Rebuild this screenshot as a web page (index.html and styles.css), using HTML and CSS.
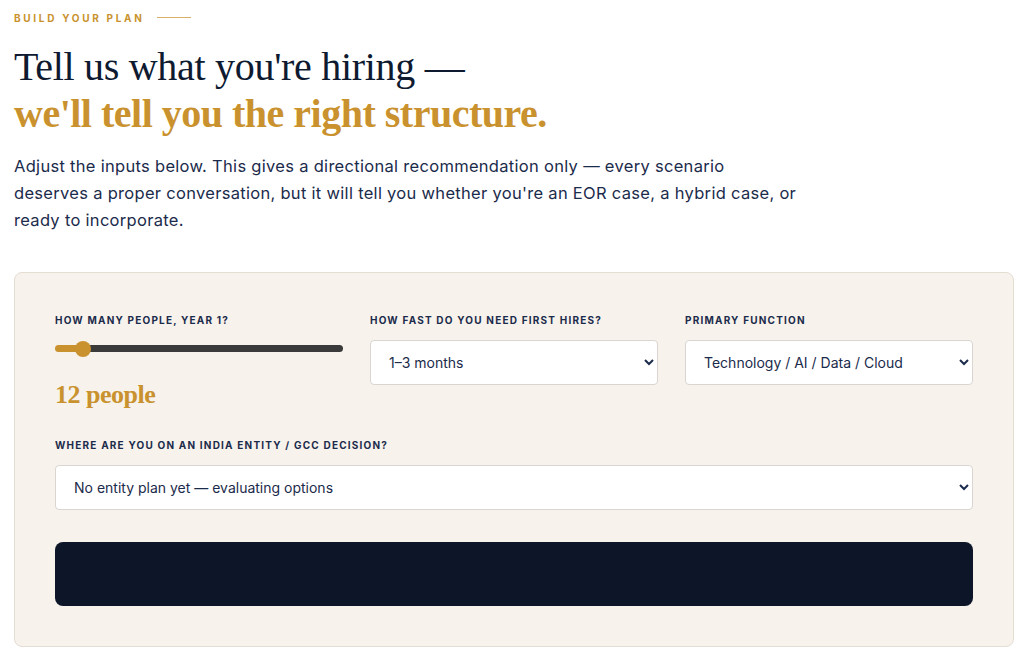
FILE: index.html
```html
<!DOCTYPE html>
<html lang="en">
  <head>
    <meta charset="UTF-8" />
    <meta name="viewport" content="width=device-width, initial-scale=1.0" />
    <title>Build your plan</title>
    <link rel="stylesheet" href="styles.css">
  </head>
  <body>
    <section class="plan">
      <div class="eyebrow">
        <span>Build your plan</span>
        <span class="eyebrow-line"></span>
      </div>

      <h1 class="title">
        Tell us what you're hiring —<br />
        <strong>we'll tell you the right structure.</strong>
      </h1>

      <p class="lead">
        Adjust the inputs below. This gives a directional recommendation only — every scenario<br />
        deserves a proper conversation, but it will tell you whether you're an EOR case, a hybrid case, or<br />
        ready to incorporate.
      </p>

      <div class="panel">
        <div class="row row-3">
          <div class="field">
            <label class="label" for="people">How many people, year 1?</label>
            <input class="range" id="people" type="range" min="1" max="150" value="12" style="--fill: 9.5%" />
            <div class="count">12 people</div>
          </div>

          <div class="field">
            <label class="label" for="speed">How fast do you need first hires?</label>
            <select class="select" id="speed">
              <option>1–3 months</option>
              <option>Under 1 month</option>
              <option>3–6 months</option>
              <option>6+ months</option>
            </select>
          </div>

          <div class="field">
            <label class="label" for="function">Primary function</label>
            <select class="select" id="function">
              <option>Technology / AI / Data / Cloud</option>
              <option>Sales / GTM</option>
              <option>Operations / Support</option>
              <option>Finance / Shared services</option>
            </select>
          </div>
        </div>

        <div class="field">
          <label class="label" for="entity">Where are you on an India entity / GCC decision?</label>
          <select class="select" id="entity">
            <option>No entity plan yet — evaluating options</option>
            <option>Planning an entity in the next 12 months</option>
            <option>Entity already set up</option>
          </select>
        </div>

        <button class="submit" type="button"></button>
      </div>
    </section>
  </body>
</html>
```

FILE: styles.css
```css
* {
  box-sizing: border-box;
  margin: 0;
  padding: 0;
}

body {
  font-family: "Inter", "Liberation Sans", sans-serif;
  background-color: #fff;
  color: #1b2b4b;
}

.plan {
  padding: 10px 10px 10px 14px;
}

.eyebrow {
  display: flex;
  align-items: center;
  gap: 12px;
  font-size: 10px;
  font-weight: 700;
  letter-spacing: 2.7px;
  text-transform: uppercase;
  color: #c9922e;
  height: 15px;
}

.eyebrow-line {
  width: 34px;
  height: 1px;
  background-color: #d9b06a;
}

.title {
  margin-top: 18px;
  font-family: "Liberation Serif", serif;
  font-weight: 400;
  font-size: 40px;
  line-height: 47px;
  letter-spacing: -0.3px;
  color: #0e1a30;
}

.title strong {
  color: #c9922e;
  font-weight: 700;
  letter-spacing: -0.5px;
}

.lead {
  margin-top: 16px;
  font-size: 16.5px;
  line-height: 27px;
  letter-spacing: 0.3px;
  color: #1b2b4b;
  white-space: nowrap;
}

.panel {
  margin-top: 38px;
  width: 1000px;
  padding: 41px 40px 40px;
  background-color: #f7f2ec;
  border: 1px solid #e4ddd3;
  border-radius: 8px;
}

.row-3 {
  display: grid;
  grid-template-columns: repeat(3, 1fr);
  gap: 27px;
  margin-bottom: 29px;
}

.field {
  display: flex;
  flex-direction: column;
}

.label {
  font-size: 10px;
  font-weight: 700;
  letter-spacing: 1.2px;
  text-transform: uppercase;
  color: #1b2b4b;
  margin-bottom: 14px;
}

.select {
  height: 45px;
  padding: 0 10px 0 14px;
  font-family: inherit;
  font-size: 14px;
  color: #1b2b4b;
  background-color: #fff;
  border: 1px solid #d9d5d0;
  border-radius: 4px;
}

.range {
  -webkit-appearance: none;
  appearance: none;
  width: 100%;
  height: 7px;
  margin: 5px 0 0;
  border-radius: 4px;
  background: linear-gradient(to right, #c9922e var(--fill), #3a3a3a var(--fill));
  outline: none;
}

.range::-webkit-slider-thumb {
  -webkit-appearance: none;
  width: 16px;
  height: 16px;
  border-radius: 50%;
  background-color: #c9922e;
  border: none;
  cursor: pointer;
}

.count {
  margin-top: 28px;
  font-family: "Liberation Serif", serif;
  font-size: 26px;
  font-weight: 700;
  color: #c9922e;
  letter-spacing: -0.5px;
}

.submit {
  display: block;
  width: 100%;
  height: 64px;
  margin-top: 32px;
  background-color: #0c1628;
  border: none;
  border-radius: 8px;
  cursor: pointer;
}
```
